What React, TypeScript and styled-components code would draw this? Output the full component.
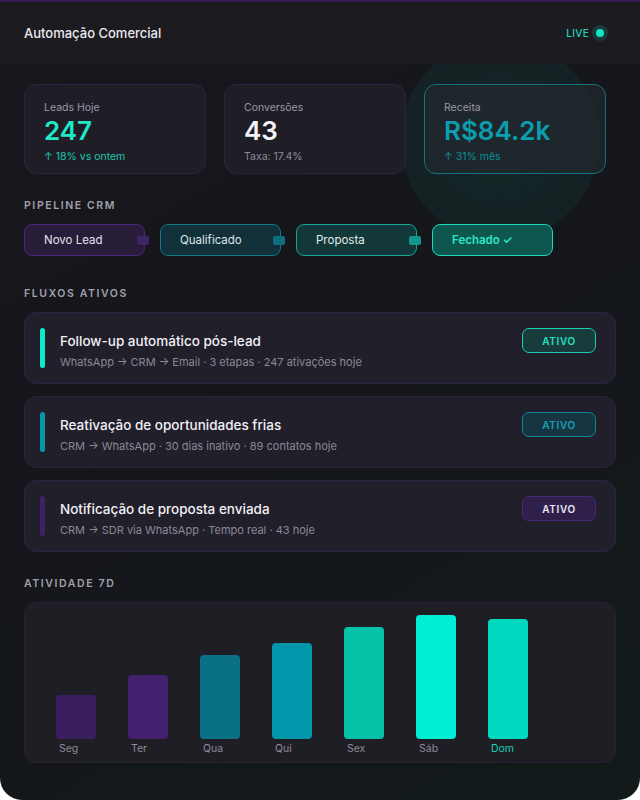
import { FC } from "react";
import styled, { createGlobalStyle } from "styled-components";

const GlobalStyle = createGlobalStyle`
  * { box-sizing: border-box; }
  body {
    margin: 0;
    background: #ffffff;
    font-family: Inter, "Noto Sans", "Liberation Sans", sans-serif;
  }
`;

type Tone = "purple" | "blue" | "teal" | "green";

const stats = [
  { label: "Leads Hoje", value: "247", sub: "↑ 18% vs ontem", valueColor: "#1de8c8", subColor: "#1cc7ad", accent: false },
  { label: "Conversões", value: "43", sub: "Taxa: 17.4%", valueColor: "#f4f3f7", subColor: "#8c8998", accent: false },
  { label: "Receita", value: "R$84.2k", sub: "↑ 31% mês", valueColor: "#0c9db0", subColor: "#0d8e9d", accent: true },
];

const stages: { label: string; tone: Tone }[] = [
  { label: "Novo Lead", tone: "purple" },
  { label: "Qualificado", tone: "blue" },
  { label: "Proposta", tone: "teal" },
  { label: "Fechado ✓", tone: "green" },
];

const flows: { title: string; meta: string; tone: Tone }[] = [
  { title: "Follow-up automático pós-lead", meta: "WhatsApp → CRM → Email · 3 etapas · 247 ativações hoje", tone: "green" },
  { title: "Reativação de oportunidades frias", meta: "CRM → WhatsApp · 30 dias inativo · 89 contatos hoje", tone: "blue" },
  { title: "Notificação de proposta enviada", meta: "CRM → SDR via WhatsApp · Tempo real · 43 hoje", tone: "purple" },
];

const days = [
  { day: "Seg", h: 44, color: "#391f5e" },
  { day: "Ter", h: 64, color: "#43206d" },
  { day: "Qua", h: 84, color: "#0a7085" },
  { day: "Qui", h: 96, color: "#0296ab" },
  { day: "Sex", h: 112, color: "#05c2a9" },
  { day: "Sáb", h: 124, color: "#00efd4" },
  { day: "Dom", h: 120, color: "#00d8c0", today: true },
];

const chipTone = {
  purple: { bg: "#271d38", border: "#4a287e", text: "#e4e1ec", dot: "#3f2468" },
  blue: { bg: "#12303a", border: "#0d7a89", text: "#dfe6ea", dot: "#0d6f7e" },
  teal: { bg: "#12383a", border: "#15a594", text: "#e4ecea", dot: "#12958a" },
  green: { bg: "#0f574e", border: "#18d9b9", text: "#2be6c7", dot: "#18d9b9" },
};

const badgeTone = {
  green: { bg: "#183c3b", border: "#1dcdb0", text: "#27e0c2", bar: "#10e8cb" },
  blue: { bg: "#173441", border: "#0d8797", text: "#0ea5b8", bar: "#0797ab" },
  purple: { bg: "#2f1f4b", border: "#472a77", text: "#ece9f4", bar: "#3f2168" },
  teal: { bg: "#183c3b", border: "#1dcdb0", text: "#27e0c2", bar: "#10e8cb" },
};

export const App: FC = () => {
  return (
    <>
      <GlobalStyle />
      <SFrame>
        <SGlow />
        <SHeader>
          <STitle>Automação Comercial</STitle>
          <SLive>
            LIVE
            <SLiveDot />
          </SLive>
        </SHeader>
        <SMain>
          <SStats>
            {stats.map((s) => (
              <SStatCard key={s.label} $accent={s.accent}>
                <SStatLabel>{s.label}</SStatLabel>
                <SStatValue $color={s.valueColor}>{s.value}</SStatValue>
                <SStatSub $color={s.subColor}>{s.sub}</SStatSub>
              </SStatCard>
            ))}
          </SStats>

          <SSectionLabel $top={25}>Pipeline CRM</SSectionLabel>
          <SPipeline>
            {stages.map((st, i) => (
              <SChip key={st.label} $tone={st.tone}>
                {st.label}
                {i < stages.length - 1 && <SConnector $tone={st.tone} />}
              </SChip>
            ))}
          </SPipeline>

          <SSectionLabel $top={31}>Fluxos Ativos</SSectionLabel>
          <SFlowList>
            {flows.map((f) => (
              <SFlowCard key={f.title}>
                <SFlowBar $tone={f.tone} />
                <SFlowText>
                  <SFlowTitle>{f.title}</SFlowTitle>
                  <SFlowMeta>{f.meta}</SFlowMeta>
                </SFlowText>
                <SBadge $tone={f.tone}>ATIVO</SBadge>
              </SFlowCard>
            ))}
          </SFlowList>

          <SSectionLabel $top={25}>Atividade 7D</SSectionLabel>
          <SChart>
            {days.map((d) => (
              <SDayCol key={d.day}>
                <SBar style={{ height: d.h, background: d.color }} />
                <SDayLabel $today={!!d.today}>{d.day}</SDayLabel>
              </SDayCol>
            ))}
          </SChart>
        </SMain>
      </SFrame>
    </>
  );
};

export default App;

const SFrame = styled.div`
  position: relative;
  width: 640px;
  height: 800px;
  overflow: hidden;
  border-top: 2px solid #331c55;
  border-radius: 0 0 22px 22px;
  background: linear-gradient(150deg, #17171c 0%, #15161b 45%, #121a1a 100%);
`;

const SGlow = styled.div`
  position: absolute;
  left: 400px;
  top: 38px;
  width: 200px;
  height: 200px;
  border-radius: 50%;
  background: radial-gradient(circle, rgba(16, 120, 100, 0.18) 0%, rgba(16, 110, 95, 0.12) 70%, rgba(16, 100, 90, 0.07) 100%);
`;

const SHeader = styled.header`
  position: relative;
  z-index: 1;
  display: flex;
  align-items: center;
  justify-content: space-between;
  height: 62px;
  padding: 0 36px 0 24px;
  background: #1c1b20;
`;

const STitle = styled.h1`
  margin: 0;
  font-size: 13px;
  font-weight: 500;
  color: #ebeaf0;
`;

const SLive = styled.div`
  display: flex;
  align-items: center;
  gap: 7px;
  font-size: 10px;
  font-weight: 500;
  letter-spacing: 0.3px;
  color: #1dd4bb;
`;

const SLiveDot = styled.span`
  width: 8px;
  height: 8px;
  border-radius: 50%;
  background: #14e6c8;
  box-shadow: 0 0 0 4px rgba(20, 200, 175, 0.18);
`;

const SMain = styled.main`
  position: relative;
  z-index: 1;
  display: flex;
  flex-direction: column;
  padding: 20px 24px;
`;

const SStats = styled.div`
  display: grid;
  grid-template-columns: repeat(3, 182px);
  gap: 18px;
`;

const SStatCard = styled.div<{ $accent: boolean }>`
  height: 90px;
  padding: 16px 19px 15px;
  border-radius: 12px;
  border: 1px solid ${(p) => (p.$accent ? "#11737e" : "#2d2342")};
  background: ${(p) => (p.$accent ? "rgba(34, 40, 46, 0.75)" : "#1f1e26")};
`;

const SStatLabel = styled.div`
  font-size: 10.5px;
  line-height: 14px;
  color: #9a97a6;
`;

const SStatValue = styled.div<{ $color: string }>`
  font-size: 26px;
  font-weight: 600;
  line-height: 31px;
  color: ${(p) => p.$color};
`;

const SStatSub = styled.div<{ $color: string }>`
  margin-top: 4px;
  font-size: 10.5px;
  line-height: 14px;
  color: ${(p) => p.$color};
`;

const SSectionLabel = styled.h2<{ $top: number }>`
  margin: ${(p) => p.$top}px 0 11px;
  font-size: 10.5px;
  line-height: 14px;
  font-weight: 600;
  letter-spacing: 1.6px;
  text-transform: uppercase;
  color: #a2a0ad;
`;

const SPipeline = styled.div`
  display: flex;
  gap: 15px;
`;

const SChip = styled.div<{ $tone: Tone }>`
  position: relative;
  display: flex;
  align-items: center;
  width: 121px;
  height: 32px;
  padding-left: 19px;
  border-radius: 8px;
  font-size: 11.5px;
  font-weight: ${(p) => (p.$tone === "green" ? 600 : 400)};
  color: ${(p) => chipTone[p.$tone].text};
  background: ${(p) => chipTone[p.$tone].bg};
  border: 1.5px solid ${(p) => chipTone[p.$tone].border};
`;

const SConnector = styled.span<{ $tone: Tone }>`
  position: absolute;
  right: -5px;
  top: 50%;
  width: 12px;
  height: 9px;
  margin-top: -4.5px;
  border-radius: 2px;
  background: ${(p) => chipTone[p.$tone].dot};
`;

const SFlowList = styled.div`
  display: flex;
  flex-direction: column;
  gap: 12px;
`;

const SFlowCard = styled.div`
  display: flex;
  align-items: flex-start;
  height: 72px;
  padding: 15px 19px 15px 15px;
  border-radius: 12px;
  border: 1px solid #2b2340;
  background: #211f29;
`;

const SFlowBar = styled.span<{ $tone: Tone }>`
  flex: none;
  width: 5px;
  height: 40px;
  border-radius: 3px;
  background: ${(p) => badgeTone[p.$tone].bar};
`;

const SFlowText = styled.div`
  flex: 1;
  padding-left: 15px;
`;

const SFlowTitle = styled.div`
  margin-top: 4px;
  font-size: 13.5px;
  line-height: 18px;
  font-weight: 500;
  color: #f1eff6;
`;

const SFlowMeta = styled.div`
  margin-top: 5px;
  font-size: 11px;
  line-height: 15px;
  color: #8b8897;
`;

const SBadge = styled.span<{ $tone: Tone }>`
  flex: none;
  display: flex;
  align-items: center;
  justify-content: center;
  width: 74px;
  height: 25px;
  border-radius: 7px;
  font-size: 10px;
  font-weight: 600;
  letter-spacing: 0.6px;
  color: ${(p) => badgeTone[p.$tone].text};
  background: ${(p) => badgeTone[p.$tone].bg};
  border: 1.5px solid ${(p) => badgeTone[p.$tone].border};
`;

const SChart = styled.div`
  display: flex;
  gap: 32px;
  height: 161px;
  padding: 12px 31px 6px;
  border-radius: 12px;
  border: 1px solid #261f36;
  background: #1f1e25;
`;

const SDayCol = styled.div`
  display: flex;
  flex-direction: column;
  justify-content: flex-end;
  width: 40px;
`;

const SBar = styled.div`
  width: 40px;
  border-radius: 4px;
`;

const SDayLabel = styled.span<{ $today: boolean }>`
  margin-top: 2px;
  padding-left: 3px;
  font-size: 10.5px;
  line-height: 15px;
  color: ${(p) => (p.$today ? "#16d2b7" : "#8e8b9a")};
`;
